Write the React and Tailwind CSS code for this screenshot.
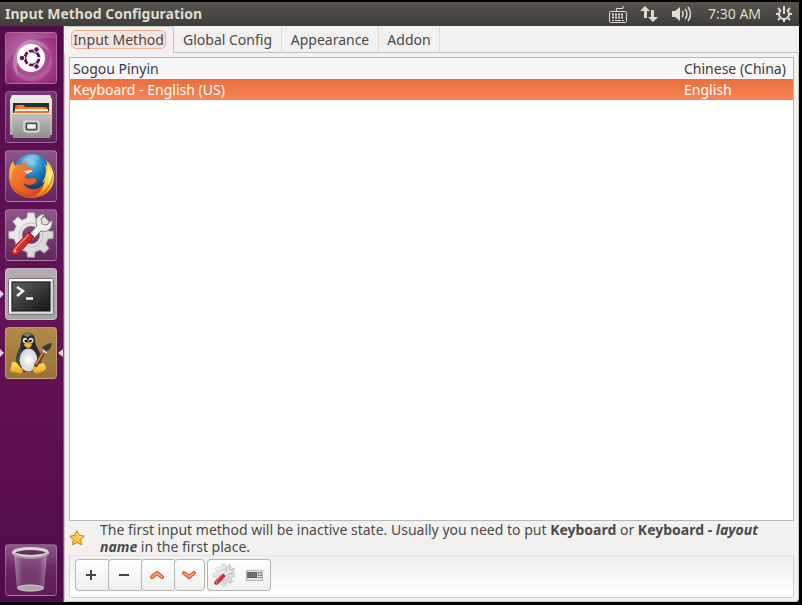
import React from "react";
import { clsx } from "clsx";

function UbuntuIcon() {
  return (
    <svg viewBox="0 0 50 50" className="size-full" aria-hidden="true">
      <defs>
        <radialGradient id="dashGlow" cx="50%" cy="50%" r="70%">
          <stop offset="0" stopColor="#c574ad" />
          <stop offset="0.45" stopColor="#aa4d91" />
          <stop offset="1" stopColor="#8f2275" />
        </radialGradient>
        <linearGradient id="dashSwirl" x1="0" y1="0" x2="1" y2="1">
          <stop offset="0" stopColor="#fff" stopOpacity="0.4" />
          <stop offset="1" stopColor="#fff" stopOpacity="0.02" />
        </linearGradient>
      </defs>
      <rect width="50" height="50" fill="url(#dashGlow)" />
      <path d="M12 43C4 32 6 13 23 7c10-2 20 5 22 15-5-9-15-12-24-6-9 7-12 16-9 27z" fill="url(#dashSwirl)" />
      <path d="M7 27C4 42 16 51 32 47c12-4 17-15 12-26 1 11-6 20-17 22C17 44 9 37 7 27z" fill="#fff" fillOpacity="0.13" />
      <path d="M0 0h50v6C34 2 17 8 6 22L0 32z" fill="#fff" fillOpacity="0.13" />
      <circle cx="25" cy="25" r="14" fill="#fff" />
      <circle cx="26" cy="25" r="7" fill="none" stroke="#651454" strokeWidth="3" />
      <path d="M26 25L20 15M26 25L20 35M26 25h11" stroke="#fff" strokeWidth="1.5" />
      <g fill="#651454" stroke="#fff" strokeWidth="1">
        <circle cx="16" cy="25" r="2.800" />
        <circle cx="30.500" cy="16.500" r="2.800" />
        <circle cx="30.500" cy="33.500" r="2.800" />
      </g>
      <circle cx="26" cy="25" r="5.400" fill="#fff" />
    </svg>
  );
}

function FilesIcon() {
  return (
    <svg viewBox="0 0 50 50" className="size-full" aria-hidden="true">
      <defs>
        <linearGradient id="cabTop" x1="0" y1="0" x2="0" y2="1">
          <stop offset="0" stopColor="#f4f4f3" />
          <stop offset="1" stopColor="#a9a9a7" />
        </linearGradient>
        <linearGradient id="cabFront" x1="0" y1="0" x2="0" y2="1">
          <stop offset="0" stopColor="#c2c2c0" />
          <stop offset="1" stopColor="#8f8f8d" />
        </linearGradient>
      </defs>
      <path d="M6 3h38l2 5v35H4V8z" fill="url(#cabTop)" />
      <path d="M6 3h38l1.500 5h-41z" fill="#e9e9e8" />
      <rect x="7" y="11" width="36" height="11" fill="#2e2d2b" />
      <path d="M10 13h8l1 2h22v6H9v-6z" fill="#e35c20" />
      <path d="M12 13h5l1 2h20v2H11z" fill="#f47b36" />
      <path d="M9 17h33v2H9z" fill="#fff1e2" />
      <path d="M8 19h35v2H8z" fill="#e8742e" />
      <path d="M6 21h39l-1 25H7z" fill="url(#cabFront)" />
      <path d="M6 21.500h39" stroke="#e1e1df" />
      <rect x="18" y="29" width="15" height="11" rx="3" fill="#a9a9a7" stroke="#d9d9d7" strokeWidth="1.500" />
      <rect x="20.500" y="31.500" width="10" height="6" rx="1" fill="#f8f8f8" stroke="#4b4b4a" strokeWidth="1.500" />
    </svg>
  );
}

function FirefoxIcon() {
  return (
    <svg viewBox="0 0 50 50" className="size-full" aria-hidden="true">
      <defs>
        <radialGradient id="globe" cx="45%" cy="20%" r="80%">
          <stop offset="0" stopColor="#76cbed" />
          <stop offset="0.45" stopColor="#247fc2" />
          <stop offset="1" stopColor="#102a65" />
        </radialGradient>
        <linearGradient id="fox" x1="0" y1="0" x2="1" y2="1">
          <stop offset="0" stopColor="#f59a35" />
          <stop offset="0.5" stopColor="#ed6926" />
          <stop offset="1" stopColor="#cf3d17" />
        </linearGradient>
        <linearGradient id="tail" x1="0" y1="0" x2="0" y2="1">
          <stop offset="0" stopColor="#f7a52c" />
          <stop offset="0.4" stopColor="#fde35a" />
          <stop offset="0.7" stopColor="#fbc72b" />
          <stop offset="1" stopColor="#e25a1c" />
        </linearGradient>
      </defs>
      <circle cx="26" cy="22" r="19" fill="url(#globe)" />
      <path d="M25 4c6-1 9 1 8 4l-5 2 3 3-5 3-4-4-6 0c2-5 5-7 9-8z" fill="#b2e2f2" fillOpacity="0.35" />
      <path d="M38 7c8 6 12 17 9 26-3 9-12 14-22 14-5 0-8-1-10-3 12 1 21-5 24-14l-3 2c4-6 5-13 3-19l3 3c0-4-1-7-4-9z" fill="url(#tail)" />
      <path d="M40 10c5 8 6 17 2 25 1-8 1-17-2-25zM45 17c3 8 1 16-3 21 2-7 3-14 3-21z" fill="#fff59a" />
      <path d="M47 22c1 10-5 19-14 23 7-5 12-13 14-23z" fill="#b9441a" fillOpacity="0.6" />
      <path d="M7 10c0 2 1 4 3 4 2-1 4-1 6 0l3-5c0 3 1 5 2 7 4 0 6 1 6 3l-6 3-2 4c1 2 4 2 7 1 3 0 5 1 5 3-2 1-3 4-7 4-3 0-5-1-7-2 4 7 13 9 21 1-2 7-8 14-17 13C10 45 2 36 3 24c0-5 1-10 4-14z" fill="url(#fox)" />
      <path d="M7 10c0 3 1 5 3 6-4 4-6 9-4 16-4-8-3-17 1-22z" fill="#f9b04a" />
      <path d="M18 20l6-1 3 1-6 3z" fill="#fbe1bd" />
      <path d="M6 32c4 9 13 13 24 12-9 5-21 0-24-12z" fill="#c83c1b" fillOpacity="0.5" />
    </svg>
  );
}

function gearPath(cx, cy, outer, inner, teeth) {
  const points = [];
  const step = (Math.PI * 2) / teeth;
  for (let i = 0; i < teeth; i++) {
    const mid = i * step - Math.PI / 2;
    for (const [offset, radius] of [[-0.3, inner], [-0.2, outer], [0.2, outer], [0.3, inner]]) {
      const angle = mid + offset * step;
      points.push(`${(cx + Math.cos(angle) * radius).toFixed(1)} ${(cy + Math.sin(angle) * radius).toFixed(1)}`);
    }
  }
  return `M${points.join("L")}z`;
}

const GEAR = `${gearPath(25, 25, 22.5, 17.5, 8)}M25 16a9 9 0 1 0 0 18 9 9 0 0 0 0-18z`;

function GearWrench() {
  return (
    <svg viewBox="0 0 50 50" className="size-full" aria-hidden="true">
      <defs>
        <linearGradient id="gearMetal" x1="0" y1="0" x2="1" y2="1">
          <stop offset="0" stopColor="#f7f7f6" />
          <stop offset="1" stopColor="#cfcfcd" />
        </linearGradient>
      </defs>
      <path fillRule="evenodd" d={GEAR} fill="url(#gearMetal)" stroke="#a2a2a0" strokeWidth="0.8" />
      <circle cx="25" cy="25" r="12" fill="none" stroke="#c2c2c0" strokeWidth="1" />
      <path d="M22 26l9-10c-3-6 1-12 8-12l-4 5 1 5 5 1 5-5c1 8-4 13-11 11l-9 9z" fill="#ecece9" stroke="#858582" />
      <path d="M33 17L24 27" stroke="#fff" strokeWidth="1.500" />
      <path d="M23 22l5 5-16 17c-4 3-9-1-6-5z" fill="#cf2a27" stroke="#8d1614" />
      <path d="M22 25L9 39" stroke="#ee6f65" strokeWidth="2" strokeLinecap="round" />
      <circle cx="9" cy="41" r="1.500" fill="#f4b3ae" />
    </svg>
  );
}

function TerminalIcon() {
  return (
    <svg viewBox="0 0 50 50" className="size-full" aria-hidden="true">
      <defs>
        <linearGradient id="screen" x1="0" y1="0" x2="1" y2="1">
          <stop offset="0" stopColor="#616161" />
          <stop offset="0.5" stopColor="#3b3b3b" />
          <stop offset="1" stopColor="#151515" />
        </linearGradient>
      </defs>
      <rect x="2.500" y="9.500" width="45" height="36" rx="1" fill="#d7d7d4" stroke="#777" />
      <path d="M4 11h42M4 11v33" stroke="#fff" strokeWidth="2" />
      <rect x="6" y="13" width="38" height="29" fill="url(#screen)" stroke="#141414" />
      <path d="M11 18l6 4-6 5M20 29.500h7" stroke="#f7f7f7" strokeWidth="2.500" fill="none" />
    </svg>
  );
}

function TuxIcon() {
  return (
    <svg viewBox="0 0 50 50" className="size-full" aria-hidden="true">
      <defs>
        <radialGradient id="belly">
          <stop offset="0" stopColor="#fff" />
          <stop offset="1" stopColor="#d1d2d3" />
        </radialGradient>
        <linearGradient id="feet" x1="0" y1="0" x2="0" y2="1">
          <stop offset="0" stopColor="#ffe26b" />
          <stop offset="1" stopColor="#eda21b" />
        </linearGradient>
      </defs>
      <path d="M15 12c0-9 13-10 14 0 0 7 5 10 6 17 1 9-5 15-13 15S10 40 10 31c1-8 5-11 5-19z" fill="#252a2c" />
      <path d="M15 17l-4 11c-3 7-1 10 2 12l2-13z" fill="#454a4d" />
      <ellipse cx="22.500" cy="32" rx="9" ry="11.500" fill="url(#belly)" />
      <path d="M17 7c2-2 6-3 9 0l-5 2z" fill="#777d80" />
      <ellipse cx="19" cy="12.500" rx="2.300" ry="2.800" fill="#d5d8d8" />
      <ellipse cx="25" cy="12.500" rx="2.500" ry="2.800" fill="#d5d8d8" />
      <circle cx="19.800" cy="13" r="1.200" />
      <circle cx="24.500" cy="13" r="1.200" />
      <path d="M18 16c2-2 4-2 8 0-1 3-3 4-4 4-2-1-4-2-4-4z" fill="#f6b826" stroke="#c88118" strokeWidth="0.500" />
      <path d="M6 34l4 0 7 8c0 4-3 4-6 3l-7-2c1-3 1-6 2-9zM29 36l9-1 2 4c1 3-3 5-8 6-5 1-6-3-4-6z" fill="url(#feet)" stroke="#bf8422" strokeWidth="0.500" />
      <path d="M40 20L30 37" stroke="#693719" strokeWidth="4" strokeLinecap="round" />
      <path d="M38 23L30 36" stroke="#cc8148" strokeWidth="2" strokeLinecap="round" />
      <path d="M36 19c3-1 5-4 10-4-1 4-1 7-6 8z" fill="#393c3d" />
      <path d="M36.500 22l4 3" stroke="#ddd" strokeWidth="2" />
    </svg>
  );
}

function TrashIcon() {
  return (
    <svg viewBox="0 0 50 50" className="size-full" aria-hidden="true">
      <defs>
        <linearGradient id="glass" x1="0" y1="0" x2="1" y2="0">
          <stop offset="0" stopColor="#eee" stopOpacity="0.45" />
          <stop offset="0.25" stopColor="#eee" stopOpacity="0.12" />
          <stop offset="0.75" stopColor="#eee" stopOpacity="0.12" />
          <stop offset="1" stopColor="#fff" stopOpacity="0.4" />
        </linearGradient>
      </defs>
      <path d="M8 9l3 34c5 5 22 5 27 0l3-34z" fill="url(#glass)" />
      <ellipse cx="24.500" cy="43" rx="13" ry="3" fill="#aaa6a8" stroke="#d5cfd2" />
      <ellipse cx="24.500" cy="7.500" rx="17" ry="4" fill="#4c2545" fillOpacity="0.6" stroke="#d9d9d4" strokeWidth="3" />
      <path d="M7 9c8 5 27 5 35 0" fill="none" stroke="#a6a3a3" strokeWidth="2" />
    </svg>
  );
}

const launchers = [
  { name: "Search your computer", Icon: UbuntuIcon, tile: "bg-[#9d3784]" },
  { name: "Files", Icon: FilesIcon, tile: "bg-linear-to-b from-[#77376f] to-[#67205e]" },
  { name: "Firefox", Icon: FirefoxIcon, tile: "bg-linear-to-b from-[#8e578b] to-[#64245e]" },
  { name: "System Settings", Icon: GearWrench, tile: "bg-linear-to-b from-[#8e578b] to-[#64245e]" },
  { name: "Terminal", Icon: TerminalIcon, tile: "bg-linear-to-b from-[#b5acb4] to-[#aaa0a9]", running: true },
  { name: "Input Method Configuration", Icon: TuxIcon, tile: "bg-linear-to-b from-[#b28b49] to-[#96713a]", running: true, active: true },
];

function Launcher({ name, Icon, tile, running, active }) {
  return (
    <button aria-label={name} className="relative flex w-full justify-center pr-0.5">
      {running && (
        <svg viewBox="0 0 4 8" className="absolute top-[22px] left-0 h-2 w-1" aria-hidden="true">
          <path d="M0 0l4 4-4 4z" fill="#ddd2dc" />
        </svg>
      )}
      <span className={clsx("block size-[52px] overflow-hidden rounded-sm border border-white/25", tile)}>
        <Icon />
      </span>
      {active && (
        <svg viewBox="0 0 5 8" className="absolute top-[22px] right-0 h-2 w-[5px]" aria-hidden="true">
          <path d="M5 0L0 4l5 4z" fill="#ddd2dc" />
        </svg>
      )}
    </button>
  );
}

function TopBar() {
  return (
    <header className="flex h-6 shrink-0 items-center justify-between bg-linear-to-b from-[#57544c] to-[#3e3d38] pr-1.5 pl-[5px] text-[#dfdbd2]">
      <h1 className="text-sm font-bold">Input Method Configuration</h1>
      <div className="flex items-center">
        <svg viewBox="0 0 20 20" className="mr-3 size-5" fill="none" stroke="currentColor" aria-label="Keyboard" role="img">
          <path d="M8.500 7V4.500H15V2" />
          <rect x="1.500" y="7.500" width="17" height="11" rx="1" />
          <path d="M4 10.500h12M4 13.500h12" strokeWidth="2" strokeDasharray="2 1" />
          <path d="M4 16.500h2M7 16.500h6M14 16.500h2" />
        </svg>
        <svg viewBox="0 0 18 18" className="mr-3.5 size-[18px]" fill="currentColor" aria-label="Network" role="img">
          <path d="M5 1l5 5H7v7H4V6H0zM11 5h3v7h4l-5 5-5-5h3z" />
        </svg>
        <svg viewBox="0 0 20 18" className="mr-4 h-[18px] w-5" fill="none" stroke="currentColor" strokeWidth="1.500" aria-label="Volume" role="img">
          <path d="M0 6h3l5-4v14l-5-4H0z" fill="currentColor" stroke="none" />
          <path d="M10 6q2 3 0 6M13 4q4 5 0 10M16 2q5 7 0 14" />
        </svg>
        <time className="mr-3 w-[55px] text-sm whitespace-nowrap">7:30 AM</time>
        <svg viewBox="0 0 18 18" className="size-[18px]" fill="none" stroke="currentColor" strokeWidth="2" aria-label="System" role="img">
          <path d="M6 5a5 5 0 1 0 6 0M9 1v8" />
          <path d="M1 9h3M14 9h3M9 14v3M3 3l2 2M15 3l-2 2M3 15l2-2M15 15l-2-2" />
        </svg>
      </div>
    </header>
  );
}

const tabs = [
  { label: "Global Config", width: "w-[108px]" },
  { label: "Appearance", width: "w-[97px]" },
  { label: "Addon", width: "w-[61px]" },
];

function Tabs() {
  return (
    <div role="tablist" className="flex h-[27px] shrink-0 text-sm">
      <button role="tab" aria-selected="true" className="flex w-[110px] items-center justify-center rounded-t-sm border-t border-r border-[#c9c7c4] pb-px">
        <span className="rounded-[5px] border border-[#efb093] bg-[#f3e4de] px-px leading-[17px] whitespace-nowrap">Input Method</span>
      </button>
      <div className="flex flex-1 border-b border-[#c2c1bf]">
        {tabs.map((tab) => (
          <button key={tab.label} role="tab" aria-selected="false" className={clsx("border-r border-[#dddcda] pt-0.5 text-center whitespace-nowrap", tab.width)}>
            {tab.label}
          </button>
        ))}
      </div>
    </div>
  );
}

function Chevron({ down }) {
  const d = down ? "M4 7l5 4 5-4" : "M4 11l5-4 5 4";
  return (
    <svg viewBox="0 0 18 18" className="size-[18px]" fill="none" strokeLinecap="round" strokeLinejoin="round" aria-hidden="true">
      <path d={d} stroke="#d2501f" strokeWidth="4" />
      <path d={d} stroke="#f5a074" strokeWidth="2" />
    </svg>
  );
}

function ToolButton({ label, children, className }) {
  return (
    <button
      aria-label={label}
      className={clsx("flex h-8 items-center justify-center border-[#b5b5b4] bg-linear-to-b from-white to-[#f0efee]", className)}
    >
      {children}
    </button>
  );
}

function Toolbar() {
  return (
    <div role="toolbar" className="flex h-[43px] shrink-0 rounded-b-sm border border-t-[#e5e4e2] border-[#d2d1cf] bg-linear-to-b from-[#f0efed] to-white pt-[3px] pl-[5px]">
      <ToolButton label="Add" className="w-[33px] rounded-l-sm border-y border-l pr-0.5">
        <svg viewBox="0 0 12 12" className="size-3" aria-hidden="true"><path d="M1 6h10M6 1v10" stroke="#454545" strokeWidth="2" /></svg>
      </ToolButton>
      <ToolButton label="Remove" className="w-[33px] rounded-l-sm border-y border-l pr-0.5">
        <svg viewBox="0 0 12 12" className="size-3" aria-hidden="true"><path d="M1 6h10" stroke="#454545" strokeWidth="2" /></svg>
      </ToolButton>
      <ToolButton label="Move up" className="w-[33px] rounded-l-sm border-y border-l pr-0.5"><Chevron /></ToolButton>
      <ToolButton label="Move down" className="mr-0.5 w-[31px] rounded-sm border from-[#ededed] to-[#e9e9e9] pr-0.5"><Chevron down /></ToolButton>
      <ToolButton label="Configure" className="w-8 rounded-l-sm border-y border-l">
        <span className="block size-6"><GearWrench /></span>
      </ToolButton>
      <ToolButton label="Default keyboard layout" className="w-8 rounded-r-sm border-y border-r">
        <svg viewBox="0 0 17 11" className="h-[11px] w-[17px]" aria-hidden="true">
          <rect x="0.500" y="0.500" width="16" height="10" fill="#e7e7e7" stroke="#b4b4b4" />
          <rect x="1" y="2" width="10" height="6" fill="#626262" />
          <path d="M1 4h10M1 6h10" stroke="#aaa" strokeWidth="0.7" strokeDasharray="1 1" />
          <path d="M12.500 2v6M15 2v6" stroke="#555" strokeWidth="1.500" strokeDasharray="1.500 1" />
        </svg>
      </ToolButton>
    </div>
  );
}

export default function App() {
  return (
    <div className="flex h-screen flex-col bg-black pt-0.5 pr-[3px] pb-[3px] font-['Noto_Sans','Open_Sans',sans-serif]">
      <TopBar />
      <div className="flex min-h-0 flex-1">
        <nav aria-label="Launcher" className="flex w-16 shrink-0 flex-col gap-[7px] border-r border-[#855681] bg-linear-to-b from-[#520c4a] via-[#651257] to-[#500b49] pt-1.5 pb-1.5">
          {launchers.map((item) => (
            <Launcher key={item.name} {...item} />
          ))}
          <div className="mt-auto">
            <Launcher name="Trash" Icon={TrashIcon} tile="bg-linear-to-b from-[#8e578b] via-[#682460] to-[#5e1c57]" />
          </div>
        </nav>
        <main className="flex min-w-0 flex-1 flex-col rounded-br-sm bg-[#f2f1f0] text-[#4a4a4a]">
          <Tabs />
          <section className="flex min-h-0 flex-1 flex-col rounded-b-sm border-r border-b border-l border-[#c9c7c4] px-1 pt-1 pb-[3px]">
            <div className="min-h-0 flex-1 border border-[#bbb9b6] bg-white">
              <table className="w-full table-fixed border-collapse text-left text-sm">
                <colgroup>
                  <col />
                  <col className="w-[112px]" />
                </colgroup>
                <tbody>
                  <tr className="h-[21px] bg-[#f7f7f7] text-[#3c3c3c]">
                    <td className="px-[3px]">Sogou Pinyin</td>
                    <td className="px-[3px] whitespace-nowrap">Chinese (China)</td>
                  </tr>
                  <tr className="h-[21px] bg-linear-to-b from-[#eb6f3c] to-[#f68456] text-white" aria-selected="true">
                    <td className="px-[3px]">Keyboard - English (US)</td>
                    <td className="px-[3px]">English</td>
                  </tr>
                </tbody>
              </table>
            </div>
            <div className="flex h-[34px] shrink-0 items-center">
              <svg viewBox="0 0 16 16" className="mr-[15px] size-4 shrink-0" aria-hidden="true">
                <path d="M8 .8l2.200 4.600 5 .7-3.600 3.600.9 5.100L8 12.400l-4.500 2.400.9-5.100L.8 6.100l5-.7z" fill="#ffc33f" stroke="#c77c1e" strokeLinejoin="round" />
                <path d="M8 3l1.500 3.300 3 .4" fill="none" stroke="#ffeaa0" />
              </svg>
              <p className="text-sm leading-[17px]">
                The first input method will be inactive state. Usually you need to put <b>Keyboard</b> or <b>Keyboard - <i>layout name</i></b> in the first place.
              </p>
            </div>
            <Toolbar />
          </section>
        </main>
      </div>
    </div>
  );
}
